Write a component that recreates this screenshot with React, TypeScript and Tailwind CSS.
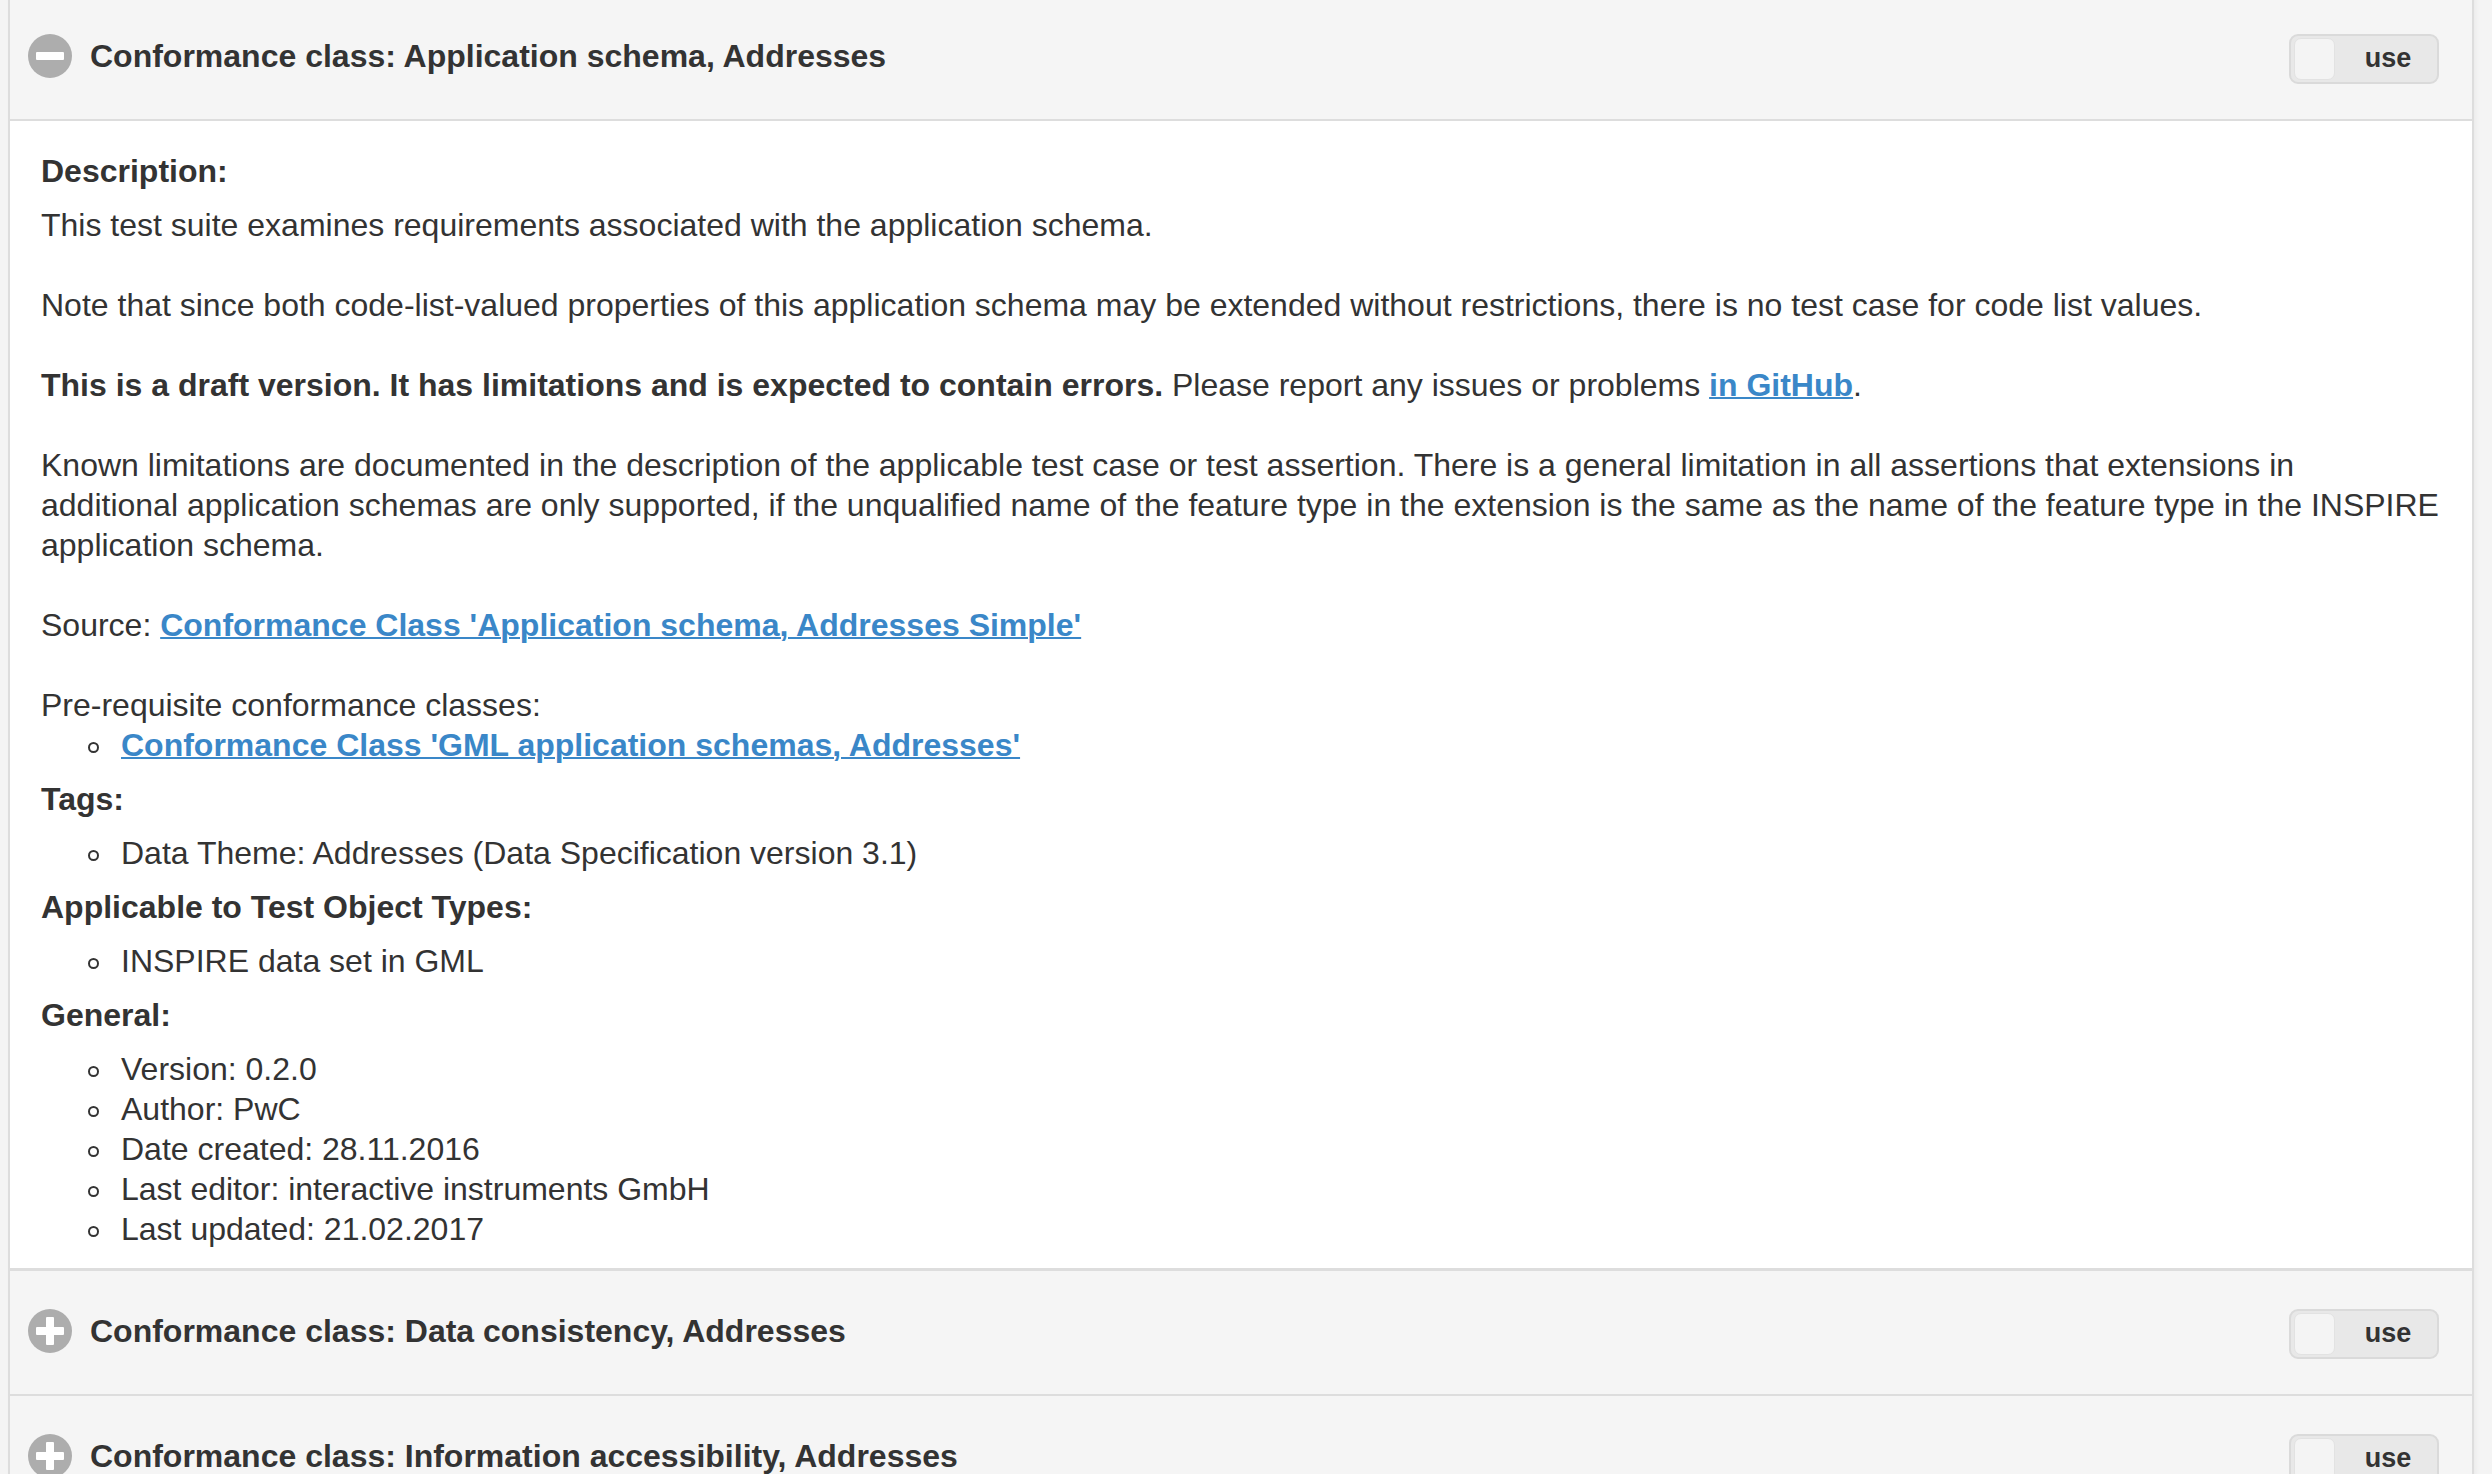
import React from "react";

function StateIcon({ open }: { open?: boolean }) {
  return (
    <svg width="44" height="44" viewBox="0 0 44 44" className="shrink-0">
      <circle cx="22" cy="22" r="22" fill="#adadad" />
      <rect x="8" y="18" width="28" height="8" rx="1" fill="#fff" />
      {!open && <rect x="18" y="8" width="8" height="28" rx="1" fill="#fff" />}
    </svg>
  );
}

function UseToggle() {
  return (
    <div className="mt-[2px] flex h-[50px] w-[150px] items-center rounded-[9px] border-2 border-[#dadada] bg-[#e8e8e8] pl-[3px] pr-[2px]">
      <div className="h-[42px] w-[41px] rounded-[7px] border border-[#e2e2e2] bg-[#f4f4f4]" />
      <span className="flex-1 pl-[6px] text-center text-[27px] font-bold leading-none text-[#333]">use</span>
    </div>
  );
}

function Heading({ title, open }: { title: string; open?: boolean }) {
  return (
    <div className="flex h-[125px] items-center justify-between border-b-2 border-[#dddddd] bg-[#f5f5f5] pl-[18px] pr-[33px]">
      <div className="flex items-center gap-[18px] pb-[4px]">
        <StateIcon open={open} />
        <span className="text-[32px] font-bold text-[#333]">{title}</span>
      </div>
      <UseToggle />
    </div>
  );
}

function Link({ children }: { children: React.ReactNode }) {
  return (
    <a href="#" className="font-bold text-[#3a87c8] underline decoration-2">
      {children}
    </a>
  );
}

function Bullets({ items }: { items: React.ReactNode[] }) {
  return (
    <ul className="pl-[47px]">
      {items.map((it, i) => (
        <li key={i} className="flex items-center gap-[22px]">
          <span className="mt-[5px] h-[11px] w-[11px] shrink-0 rounded-full border-2 border-[#333]" />
          <span>{it}</span>
        </li>
      ))}
    </ul>
  );
}

export default function App() {
  return (
    <div className="h-screen w-full overflow-hidden bg-[#f4f4f4] font-['Liberation_Sans',Arial,sans-serif] text-[#333]">
      <div className="-mt-[4px] ml-[8px] mr-[18px] border-x-2 border-[#dddddd] shadow-[2px_0_4px_rgba(0,0,0,0.04)]">
        <Heading title="Conformance class: Application schema, Addresses" open />

        <div className="flex flex-col gap-[14px] border-b-[3px] border-[#dddddd] bg-white pb-[19px] pl-[31px] pr-[20px] pt-[30px] text-[32px] leading-[40px]">
          <div className="font-bold">Description:</div>
          <div className="flex flex-col gap-[40px]">
            <p>This test suite examines requirements associated with the application schema.</p>
            <p>
              Note that since both code-list-valued properties of this application schema may be extended without
              restrictions, there is no test case for code list values.
            </p>
            <p>
              <strong>This is a draft version. It has limitations and is expected to contain errors.</strong> Please
              report any issues or problems <Link>in GitHub</Link>.
            </p>
            <p>
              Known limitations are documented in the description of the applicable test case or test assertion. There
              is a general limitation in all assertions that extensions in
              <br />
              additional application schemas are only supported, if the unqualified name of the feature type in the
              extension is the same as the name of the feature type in the INSPIRE
              <br />
              application schema.
            </p>
            <p>
              Source: <Link>Conformance Class 'Application schema, Addresses Simple'</Link>
            </p>
            <div>
              <p>Pre-requisite conformance classes:</p>
              <Bullets items={[<Link>Conformance Class 'GML application schemas, Addresses'</Link>]} />
            </div>
          </div>
          <div className="font-bold">Tags:</div>
          <Bullets items={["Data Theme: Addresses (Data Specification version 3.1)"]} />
          <div className="font-bold">Applicable to Test Object Types:</div>
          <Bullets items={["INSPIRE data set in GML"]} />
          <div className="font-bold">General:</div>
          <Bullets
            items={[
              "Version: 0.2.0",
              "Author: PwC",
              "Date created: 28.11.2016",
              "Last editor: interactive instruments GmbH",
              "Last updated: 21.02.2017",
            ]}
          />
        </div>

        <Heading title="Conformance class: Data consistency, Addresses" />
        <Heading title="Conformance class: Information accessibility, Addresses" />
      </div>
    </div>
  );
}
